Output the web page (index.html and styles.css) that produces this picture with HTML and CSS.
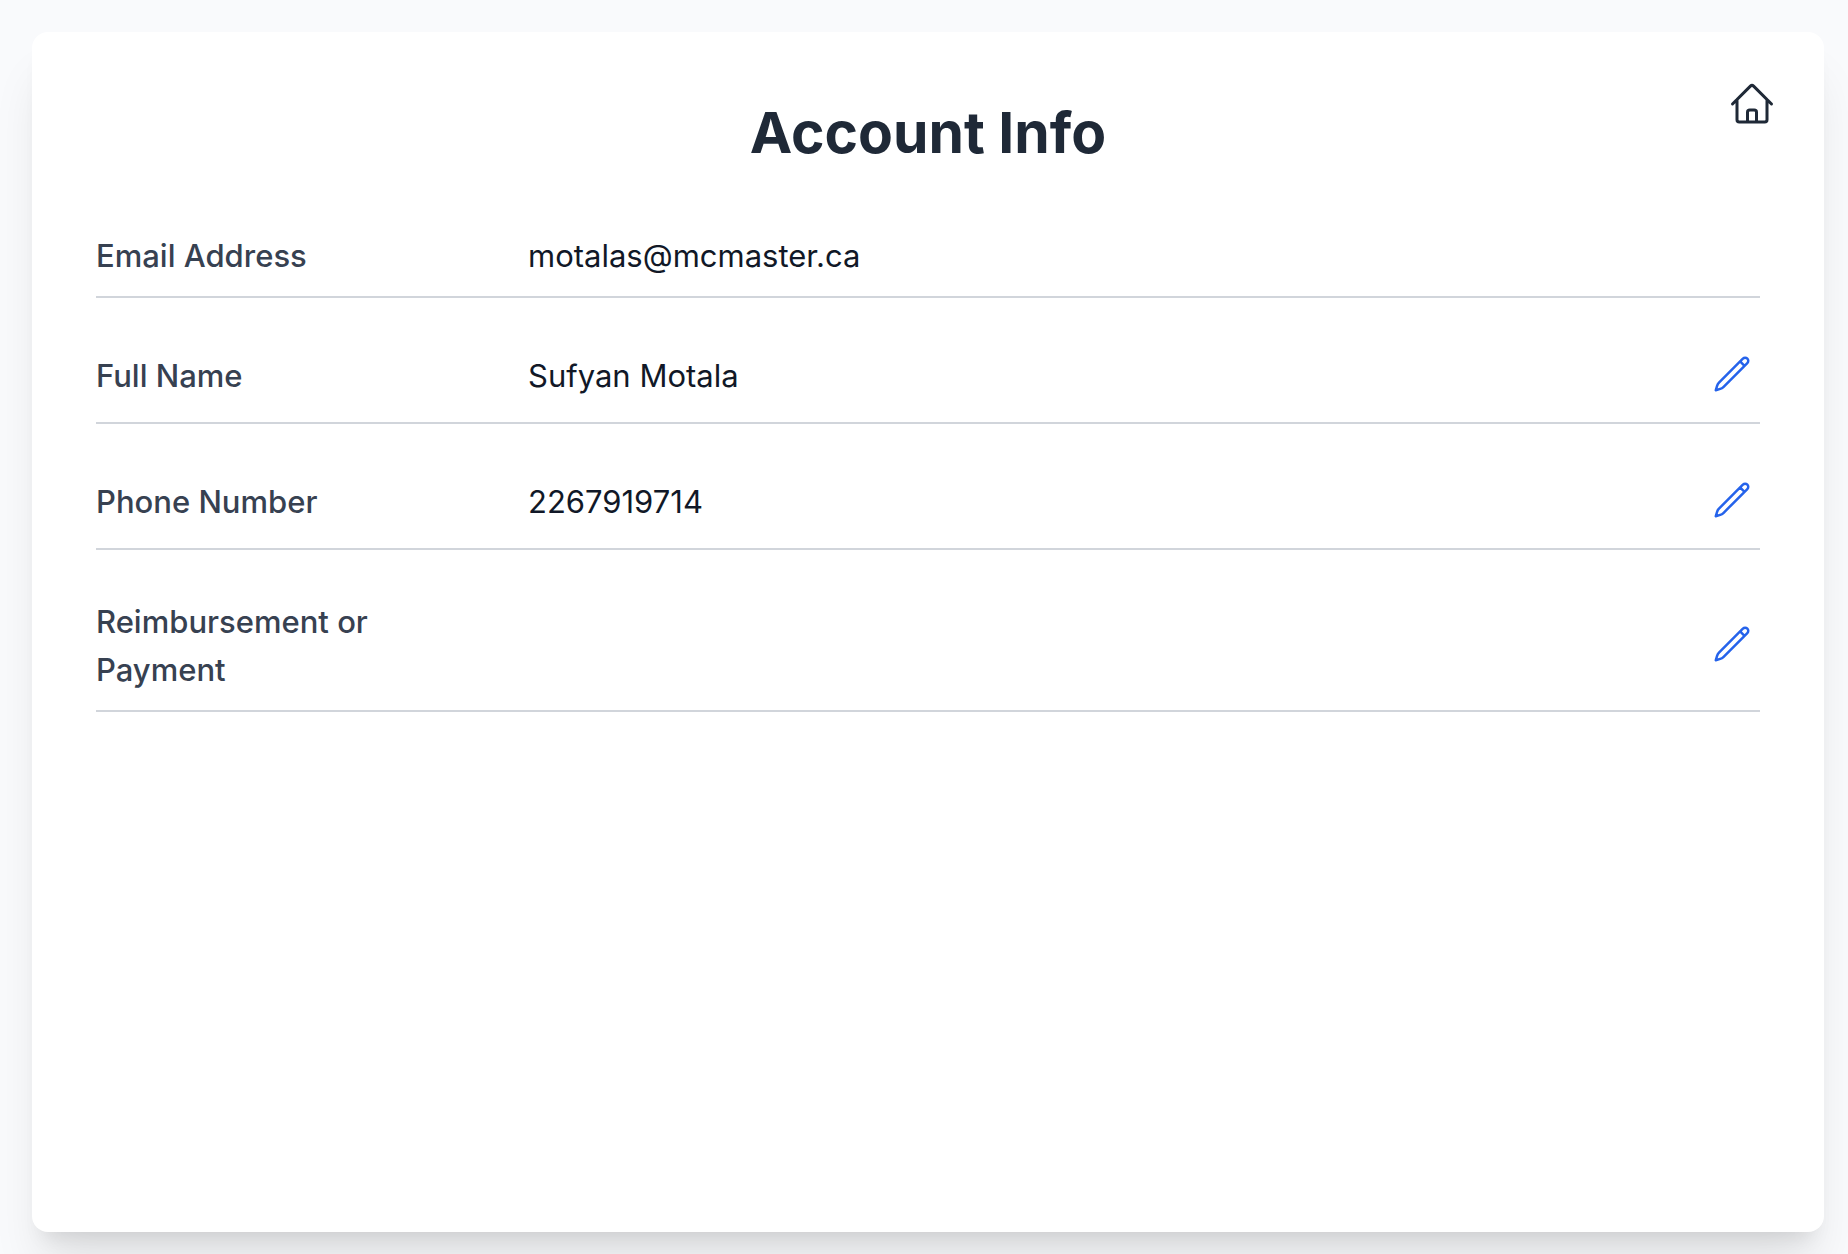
FILE: index.html
```html
<!DOCTYPE html>
<html lang="en">
<head>
  <meta charset="utf-8">
  <meta name="viewport" content="width=device-width, initial-scale=1">
  <title>Account Info</title>
  <link rel="stylesheet" href="styles.css">
</head>
<body>
  <svg class="sprite" aria-hidden="true">
    <symbol id="pencil" viewBox="0 0 24 24">
      <path d="m16.862 4.487 1.687-1.688a1.875 1.875 0 1 1 2.652 2.652L6.832 19.82a4.5 4.5 0 0 1-1.897 1.13l-2.685.8.8-2.685a4.5 4.5 0 0 1 1.13-1.897L16.863 4.487Zm0 0L19.5 7.125"/>
    </symbol>
  </svg>
  <main class="card">
    <header class="card-header">
      <h1 class="title">Account Info</h1>
      <a class="home-link" href="/" aria-label="Home">
        <svg class="icon icon-home" viewBox="0 0 24 24" aria-hidden="true">
          <path d="m2.25 12 8.954-8.955c.44-.439 1.152-.439 1.591 0L21.75 12M4.5 9.75v10.125c0 .621.504 1.125 1.125 1.125H9.75v-4.875c0-.621.504-1.125 1.125-1.125h2.25c.621 0 1.125.504 1.125 1.125V21h4.125c.621 0 1.125-.504 1.125-1.125V9.75M8.25 21h8.25"/>
        </svg>
      </a>
    </header>
    <dl class="fields">
      <div class="field">
        <dt class="label">Email Address</dt>
        <dd class="value">motalas@mcmaster.ca</dd>
      </div>
      <div class="field">
        <dt class="label">Full Name</dt>
        <dd class="value">Sufyan Motala</dd>
        <dd class="action">
          <button class="edit" type="button" aria-label="Edit full name"><svg class="icon icon-edit" aria-hidden="true"><use href="#pencil"/></svg></button>
        </dd>
      </div>
      <div class="field">
        <dt class="label">Phone Number</dt>
        <dd class="value">2267919714</dd>
        <dd class="action">
          <button class="edit" type="button" aria-label="Edit phone number"><svg class="icon icon-edit" aria-hidden="true"><use href="#pencil"/></svg></button>
        </dd>
      </div>
      <div class="field">
        <dt class="label">Reimbursement or Payment</dt>
        <dd class="value"></dd>
        <dd class="action">
          <button class="edit" type="button" aria-label="Edit reimbursement or payment"><svg class="icon icon-edit" aria-hidden="true"><use href="#pencil"/></svg></button>
        </dd>
      </div>
    </dl>
  </main>
</body>
</html>
```
FILE: styles.css
```css
* {
  box-sizing: border-box;
}

body {
  display: flex;
  min-height: 100vh;
  margin: 0;
  padding: 32px 24px 22px 32px;
  background: #f9fafc;
  color: #111827;
  font-family: Inter, "Liberation Sans", sans-serif;
  font-size: 31px;
  line-height: 48px;
}

.sprite {
  position: absolute;
  width: 0;
  height: 0;
}

.card {
  flex: 1;
  min-width: 0;
  padding: 64px;
  border-radius: 16px;
  background: #fff;
  box-shadow: 0 40px 50px -10px rgb(0 0 0 / 10%), 0 16px 20px -12px rgb(0 0 0 / 10%);
}

.card-header {
  display: grid;
  grid-template-columns: 1fr auto 1fr;
  align-items: start;
  margin-bottom: 62px;
}

.title {
  grid-column: 2;
  margin: 0;
  color: #1f2937;
  font-size: 57px;
  font-weight: 700;
  line-height: 74px;
}

.home-link {
  justify-self: end;
  margin: -16px -16px 0 0;
  color: #1f2937;
}

.icon {
  display: block;
  fill: none;
  stroke: currentColor;
  stroke-width: 1.5;
  stroke-linecap: round;
  stroke-linejoin: round;
}

.icon-home {
  width: 48px;
  height: 48px;
}

.icon-edit {
  width: 40px;
  height: 40px;
}

.fields {
  display: grid;
  gap: 48px;
  margin: 0;
}

.field {
  display: grid;
  grid-template-columns: repeat(4, minmax(0, 1fr));
  column-gap: 64px;
  align-items: center;
  padding-bottom: 16px;
  border-bottom: 2px solid #d1d5db;
}

.label {
  color: #374151;
  font-weight: 500;
}

.value {
  grid-column: span 2;
  margin: 0;
}

.action {
  display: flex;
  justify-content: flex-end;
  margin: 0;
  padding-bottom: 4px;
}

.edit {
  padding: 8px;
  border: 0;
  background: none;
  color: #2563eb;
  cursor: pointer;
}
```
